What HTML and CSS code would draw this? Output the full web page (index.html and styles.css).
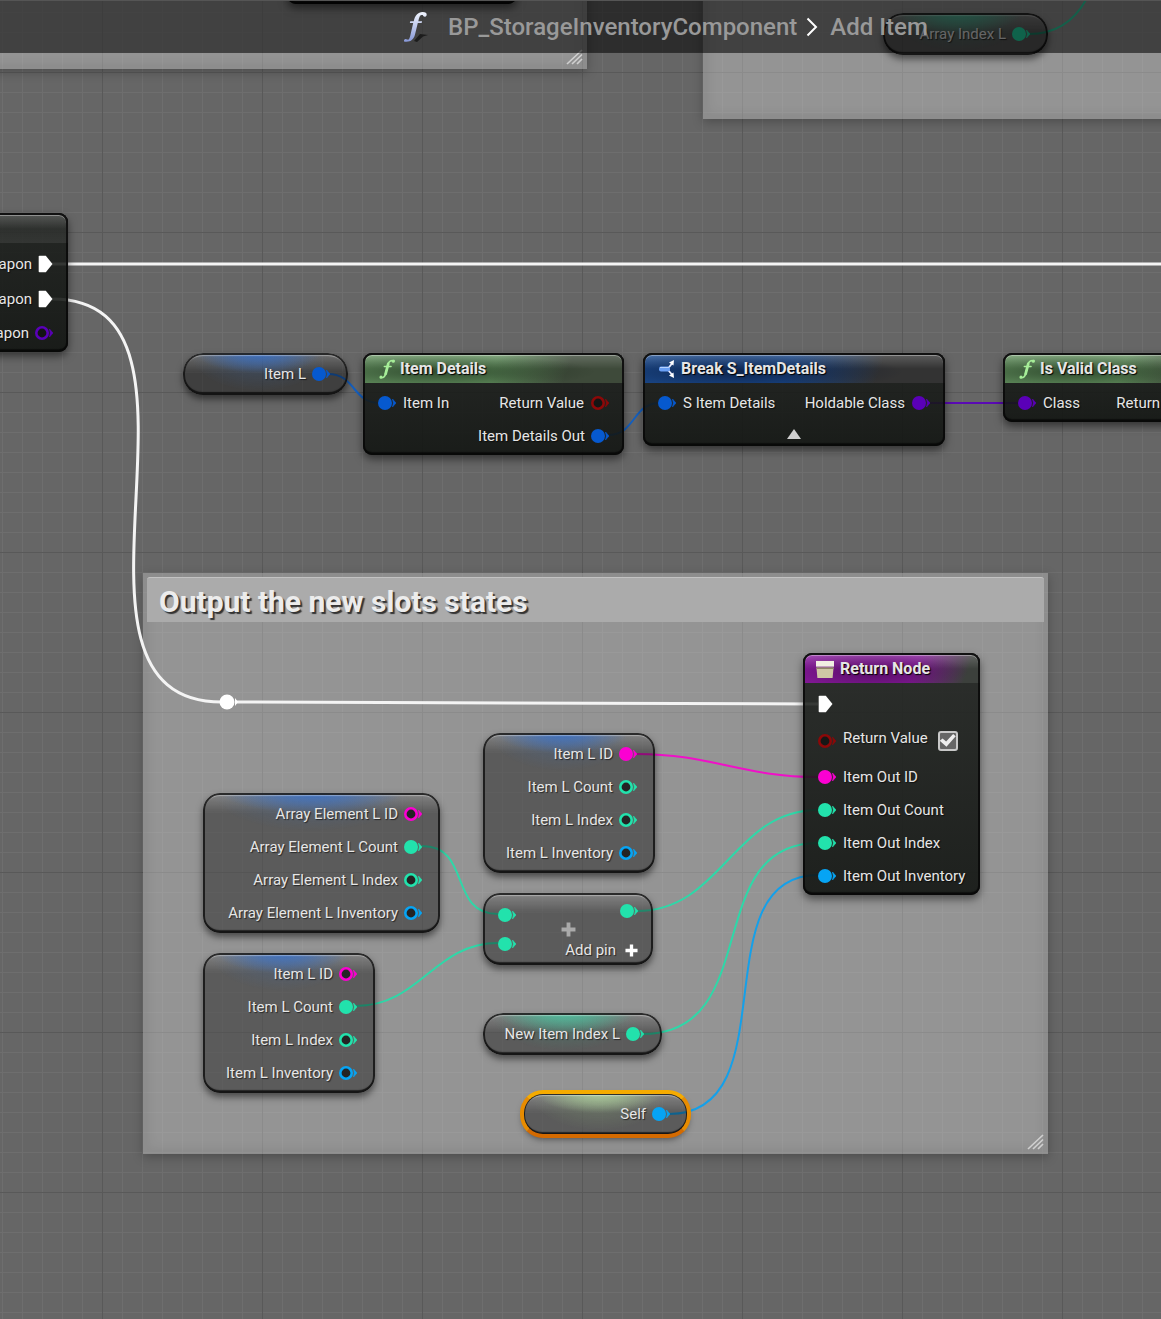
FILE: index.html
```html
<!DOCTYPE html>
<html lang="en">
<head>
<meta charset="utf-8">
<meta name="viewport" content="width=device-width, initial-scale=1">
<title>BP_StorageInventoryComponent</title>
<link rel="stylesheet" href="styles.css">
</head>
<body>
<svg class="defs" aria-hidden="true">
  <symbol id="pin" viewBox="0 0 18 16"><circle cx="7" cy="8" r="7" fill="currentColor"/><path d="M14.500 4 18 8l-3.500 4q1.500-4 0-8z" fill="currentColor" stroke="currentColor" stroke-width=".6"/></symbol>
  <symbol id="pin-open" viewBox="0 0 18 16"><circle cx="7" cy="8" r="5.700" fill="#111" fill-opacity=".75" stroke="currentColor" stroke-width="2.600"/><path d="M14.500 4 18 8l-3.500 4q1.500-4 0-8z" fill="currentColor" stroke="currentColor" stroke-width=".6"/></symbol>
  <symbol id="exec" viewBox="0 0 15 18"><path d="M1.500.8h6.300L14.500 9l-6.700 8.200H1.500q-.8 0-.8-.8V1.600q0-.8.8-.8z" fill="#fff"/></symbol>
  <symbol id="func" viewBox="0 0 16 20"><g fill="none" stroke="currentColor" stroke-linecap="round"><path d="M1.500 18.600C4.500 19.300 6 17.500 6.800 14L9 5.500C9.700 2.600 11.500 1.100 15 1.600" stroke-width="1.600"/><path d="M6.600 15 9.200 5" stroke-width="2.800"/><path d="M5.300 7.500h6.800" stroke-width="1.400"/></g><circle cx="2" cy="18.100" r="1.500" fill="currentColor"/><circle cx="14.300" cy="2.300" r="1.500" fill="currentColor"/></symbol>
  <symbol id="break" viewBox="0 0 18 20"><path d="M10 9.500 14 4.500M10 11l4 4.500" stroke="#eef" stroke-width="1.800" fill="none"/><path d="m11 3.500 5-2.500-.5 5.500zM11 16.500l5 2.500-.5-5.500z" fill="#fff"/><rect x="1" y="7.500" width="11" height="5" rx="2" fill="#6aa0f5"/><path d="M2 8.500h9" stroke="#b5d2ff"/></symbol>
  <symbol id="plus" viewBox="0 0 14 14"><path d="M7 .5v13M.5 7h13" stroke="currentColor" stroke-width="3.600"/></symbol>
  <symbol id="grip" viewBox="0 0 17 16"><path d="M1 15 16 1M6 15 16 5.500M11 15l5-5" stroke="currentColor" stroke-width="1.700"/></symbol>
</svg>

<main class="canvas">
  <section class="comment comment-left"><svg class="grip"><use href="#grip"/></svg></section>
  <section class="comment comment-right"></section>
  <section class="comment comment-output">
    <h2>Output the new slots states</h2>
    <svg class="grip"><use href="#grip"/></svg>
  </section>

  <svg class="wires" aria-hidden="true">
    <g class="w-exec">
      <path d="M52 264H2400"/>
      <path d="M52 299C241 299 30 702 222 702"/>
      <path d="M236 702 818 704"/>
    </g>
    <g class="w-struct">
      <path d="M328 374C356 374 352 403 380 403"/>
      <path d="M608 435C636 435 632 403 660 403"/>
    </g>
    <path class="w-class" d="M930 403H1018"/>
    <path class="w-name" d="M636 754C712 754 742 777 818 777"/>
    <g class="w-int">
      <path d="M422 846C472 846 448 914 498 914"/>
      <path d="M356 1006C420 1006 434 943 498 943"/>
      <path d="M637 911C722 911 733 810 818 810"/>
      <path d="M643 1034C765 1034 700 843 818 843"/>
      <path d="M1029 34C1060 34 1078 16 1088 -4"/>
    </g>
    <path class="w-object" d="M669 1114C790 1114 700 875 818 875"/>
  </svg>

  <article class="node top-node"></article>

  <article class="node event-node">
    <header></header>
    <div class="body">
      <div class="row exec-row out"><span>Weapon</span><svg class="exec"><use href="#exec"/></svg></div>
      <div class="row exec-row out"><span>Weapon</span><svg class="exec"><use href="#exec"/></svg></div>
      <div class="row out"><span>Weapon</span><svg class="pin class"><use href="#pin-open"/></svg></div>
    </div>
  </article>

  <article class="node var pill struct-tint item-l">
    <div class="row out"><span>Item L</span><svg class="pin struct"><use href="#pin"/></svg></div>
  </article>

  <article class="node func item-details">
    <header><svg class="func-icon"><use href="#func"/></svg><h3>Item Details</h3></header>
    <div class="body">
      <div class="row">
        <svg class="pin struct"><use href="#pin"/></svg><span>Item In</span>
        <span class="push">Return Value</span><svg class="pin bool"><use href="#pin-open"/></svg>
      </div>
      <div class="row out"><span>Item Details Out</span><svg class="pin struct"><use href="#pin"/></svg></div>
    </div>
  </article>

  <article class="node break break-details">
    <header><svg class="break-icon"><use href="#break"/></svg><h3>Break S_ItemDetails</h3></header>
    <div class="body">
      <div class="row">
        <svg class="pin struct"><use href="#pin"/></svg><span>S Item Details</span>
        <span class="push">Holdable Class</span><svg class="pin class"><use href="#pin"/></svg>
      </div>
      <button class="expander" type="button" aria-label="Collapse pins"></button>
    </div>
  </article>

  <article class="node func valid-class">
    <header><svg class="func-icon"><use href="#func"/></svg><h3>Is Valid Class</h3></header>
    <div class="body">
      <div class="row">
        <svg class="pin class"><use href="#pin"/></svg><span>Class</span>
        <span class="push">Return Value</span><svg class="pin bool"><use href="#pin-open"/></svg>
      </div>
    </div>
  </article>

  <article class="node return return-node">
    <header>
      <svg class="return-icon" viewBox="0 0 20 20"><path d="M.5 1h19v6H.5z" fill="#f1efe2"/><path d="M1 8h18l-1 11H2z" fill="#cfc7a5"/><path d="M1 8h18v1.500H1z" fill="#8d8765"/></svg>
      <h3>Return Node</h3>
    </header>
    <div class="body">
      <div class="row exec-row"><svg class="exec"><use href="#exec"/></svg></div>
      <div class="row bool-row"><svg class="pin bool"><use href="#pin-open"/></svg><label for="rv">Return Value</label><input id="rv" type="checkbox" checked></div>
      <div class="row"><svg class="pin name"><use href="#pin"/></svg><span>Item Out ID</span></div>
      <div class="row"><svg class="pin int"><use href="#pin"/></svg><span>Item Out Count</span></div>
      <div class="row"><svg class="pin int"><use href="#pin"/></svg><span>Item Out Index</span></div>
      <div class="row"><svg class="pin object"><use href="#pin"/></svg><span>Item Out Inventory</span></div>
    </div>
  </article>

  <article class="node var struct-tint item-top">
    <div class="row out"><span>Item L ID</span><svg class="pin name"><use href="#pin"/></svg></div>
    <div class="row out"><span>Item L Count</span><svg class="pin int"><use href="#pin-open"/></svg></div>
    <div class="row out"><span>Item L Index</span><svg class="pin int"><use href="#pin-open"/></svg></div>
    <div class="row out"><span>Item L Inventory</span><svg class="pin object"><use href="#pin-open"/></svg></div>
  </article>

  <article class="node var struct-tint array-element">
    <div class="row out"><span>Array Element L ID</span><svg class="pin name"><use href="#pin-open"/></svg></div>
    <div class="row out"><span>Array Element L Count</span><svg class="pin int"><use href="#pin"/></svg></div>
    <div class="row out"><span>Array Element L Index</span><svg class="pin int"><use href="#pin-open"/></svg></div>
    <div class="row out"><span>Array Element L Inventory</span><svg class="pin object"><use href="#pin-open"/></svg></div>
  </article>

  <article class="node var struct-tint item-bottom">
    <div class="row out"><span>Item L ID</span><svg class="pin name"><use href="#pin-open"/></svg></div>
    <div class="row out"><span>Item L Count</span><svg class="pin int"><use href="#pin"/></svg></div>
    <div class="row out"><span>Item L Index</span><svg class="pin int"><use href="#pin-open"/></svg></div>
    <div class="row out"><span>Item L Inventory</span><svg class="pin object"><use href="#pin-open"/></svg></div>
  </article>

  <article class="node var add-node">
    <div class="add-in">
      <svg class="pin int"><use href="#pin"/></svg>
      <svg class="pin int"><use href="#pin"/></svg>
    </div>
    <svg class="add-symbol"><use href="#plus"/></svg>
    <div class="add-out">
      <svg class="pin int"><use href="#pin"/></svg>
      <button type="button" class="add-pin">Add pin <svg><use href="#plus"/></svg></button>
    </div>
  </article>

  <article class="node var pill int-tint new-index">
    <div class="row out"><span>New Item Index L</span><svg class="pin int"><use href="#pin"/></svg></div>
  </article>

  <article class="node var pill self-tint self-node">
    <div class="row out"><span>Self</span><svg class="pin object"><use href="#pin"/></svg></div>
  </article>

  <article class="node var pill int-tint array-index">
    <div class="row out"><span>Array Index L</span><svg class="pin int"><use href="#pin"/></svg></div>
  </article>

  <svg class="reroute" viewBox="0 0 20 16" aria-hidden="true"><circle cx="8" cy="8" r="7.500" fill="#fff"/><path d="M16 4l3 4-3 4z" fill="#fff"/></svg>

  <nav class="title-bar" aria-label="Graph path">
    <svg class="title-icon" viewBox="0 0 26 32">
      <defs><linearGradient id="fg" x1="0" y1="0" x2="0" y2="1"><stop offset="0" stop-color="#f2f6ff"/><stop offset="1" stop-color="#8798d8"/></linearGradient></defs>
      <path d="M11 30 17 23l8 1-5 1.500L14 31z" fill="#1c1c1c"/>
      <path d="M1 30.500c-.4-2.500 1.500-3.300 3.200-2 1.500.6 2.300-.6 3-3.500L10.200 12H6.800l.5-1.800h3.400C12 4.500 15 1 19.500 1 22.500 1 24 2.200 23.700 4c-.5 2.300-3.400 2.300-3.700.3-2.500-1-3.700.8-4.700 5.900h3.800l-.5 1.800h-3.800L12 23.500C10.700 29 7 31.500 1 30.500z" fill="url(#fg)"/>
    </svg>
    <a href="#component">BP_StorageInventoryComponent</a>
    <svg class="chevron" viewBox="0 0 12 20"><path d="M1.500 1.500 10 10l-8.500 8.500" fill="none" stroke="#fff" stroke-width="2"/></svg>
    <a href="#add-item">Add Item</a>
  </nav>
</main>
</body>
</html>
```
FILE: styles.css
```css
* { box-sizing: border-box; }

body {
  margin: 0;
  font: 15px/20px Roboto, "Liberation Sans", sans-serif;
  color: #e6e6e6;
}

h2, h3 { margin: 0; }
svg { flex: none; }
.defs { position: absolute; width: 0; height: 0; }

.canvas {
  position: relative;
  min-height: 100vh;
  overflow: hidden;
  background-color: #666;
  background-image:
    linear-gradient(#595959 1px, transparent 1px),
    linear-gradient(90deg, #595959 1px, transparent 1px),
    linear-gradient(#6e6e6e 1px, transparent 1px),
    linear-gradient(90deg, #6e6e6e 1px, transparent 1px);
  background-size: 160px 160px, 160px 160px, 20px 20px, 20px 20px;
  background-position: 0 72px, 102px 0, 0 12px, 2px 0;
}

/* Comment boxes */
.comment {
  position: absolute;
  background: rgba(255, 255, 255, .3);
  border: 4px solid rgba(90, 90, 90, .12);
  box-shadow: inset 0 0 12px rgba(0, 0, 0, .08), 0 3px 10px rgba(0, 0, 0, .25);
}
.comment-left { left: -20px; top: -80px; width: 607px; height: 149px; }
.comment-right { left: 703px; top: -80px; width: 800px; height: 199px; }
.comment-output { left: 143px; top: 573px; width: 905px; height: 581px; }
.comment h2 {
  height: 45px;
  padding: 0 12px;
  background: #ababab;
  border-top: 1px solid #c2c2c2;
  border-radius: 3px 3px 0 0;
  font-size: 30px;
  line-height: 48px;
  color: #ececec;
  text-shadow: 2px 2px 1px #333;
}
.grip {
  position: absolute;
  right: 0;
  bottom: 0;
  width: 17px;
  height: 16px;
  color: #cfcfcf;
}

/* Wires */
.wires {
  position: absolute;
  left: 0;
  top: 0;
  width: 100%;
  height: 100%;
  overflow: visible;
  fill: none;
  stroke-width: 2;
}
.w-exec { stroke: #f4f4f4; stroke-width: 3; }
.w-struct { stroke: #1560c0; }
.w-class { stroke: #5a0ab4; }
.w-name { stroke: #f010c8; }
.w-int { stroke: #2ed8a8; }
.w-object { stroke: #14a0ea; }

/* Nodes */
.node {
  position: absolute;
  border-radius: 9px;
  background: linear-gradient(rgba(24, 27, 24, .84), rgba(17, 20, 17, .9));
  box-shadow:
    inset 0 0 0 2px rgba(8, 8, 8, .85),
    inset 0 -3px 1px rgba(0, 0, 0, .5),
    0 4px 8px rgba(0, 0, 0, .5);
}
.node header {
  display: flex;
  align-items: center;
  height: 30px;
  padding: 0 15px 0 14px;
  border-radius: 9px 9px 0 0;
  background:
    linear-gradient(rgba(255, 255, 255, .22), rgba(255, 255, 255, .05) 50%, rgba(255, 255, 255, .08));
  border: solid #111;
  border-width: 2px 2px 0;
  box-shadow: inset 0 1px 0 rgba(255, 255, 255, .35);
}
.node h3 {
  font-size: 16px;
  line-height: 20px;
  text-shadow: 1px 1px 1px #000;
}
.func header {
  background:
    radial-gradient(ellipse 60% 60% at 30% 60%, rgba(15, 30, 15, .6), transparent),
    linear-gradient(rgba(255, 255, 255, .2), transparent 50%),
    linear-gradient(110deg, #628f5e 50%, #3e4a3a 78%);
}
.break header {
  background:
    radial-gradient(ellipse 55% 70% at 32% 60%, rgba(5, 15, 40, .65), transparent),
    linear-gradient(rgba(255, 255, 255, .2), transparent 50%),
    linear-gradient(110deg, #1c4c90 48%, #333 78%);
}
.return header {
  padding-left: 10px;
  background:
    radial-gradient(ellipse 55% 70% at 40% 60%, rgba(40, 0, 50, .5), transparent),
    linear-gradient(rgba(255, 255, 255, .2), transparent 50%),
    linear-gradient(110deg, #861a9a 62%, #3c403c 92%);
}
.func-icon { width: 16px; height: 20px; margin-right: 5px; color: #a6ee98; }
.break-icon { width: 18px; height: 20px; margin: 0 5px 0 -1px; }
.return-icon { width: 20px; height: 19px; margin-right: 5px; }
.body { padding: 3px 0; }

.row {
  display: flex;
  align-items: center;
  gap: 7px;
  height: 33px;
  padding: 0 15px;
  white-space: nowrap;
  text-shadow: 1px 1px 1px rgba(0, 0, 0, .6);
}
.out { justify-content: flex-end; gap: 6px; }
.push { margin-left: auto; }
.exec-row { height: 35px; }
.bool-row { height: 39px; }
.bool-row label { padding-bottom: 6px; }

.pin { width: 18px; height: 16px; }
.exec { width: 15px; height: 18px; }
.struct { color: #0659cf; }
.class { color: #5a00b8; }
.bool { color: #8c0808; }
.name { color: #fb00d2; }
.int { color: #22e2ac; }
.object { color: #06a4f4; }

/* Compact variable nodes */
.var {
  padding: 4px 0;
  border-radius: 17px;
  background:
    radial-gradient(ellipse 38% 20px at 46% 0, var(--tint, transparent), transparent),
    radial-gradient(ellipse 42% 38px at 46% 0, var(--glow, transparent) 30%, transparent),
    linear-gradient(rgba(255, 255, 255, .26), rgba(255, 255, 255, 0) 20px),
    rgba(4, 4, 4, .4);
  box-shadow:
    inset 0 0 0 2px rgba(20, 20, 20, .85),
    inset 0 3px 1px rgba(255, 255, 255, .35),
    inset 0 -3px 1px rgba(0, 0, 0, .6),
    0 4px 7px rgba(0, 0, 0, .5);
}
.var .row { padding: 0 18px; }
.pill { padding-bottom: 5px; border-radius: 20px; }
.struct-tint { --tint: rgba(50, 110, 205, .8); --glow: rgba(60, 110, 180, .25); }
.int-tint { --tint: rgba(70, 205, 165, .75); --glow: rgba(60, 160, 130, .3); }
.self-tint { --tint: rgba(185, 225, 165, .75); --glow: rgba(150, 190, 130, .25); }

/* Node places on the graph */
.top-node { left: 287px; top: -80px; width: 230px; height: 84px; }
.event-node { left: -160px; top: 213px; width: 228px; }
.item-l { left: 183px; top: 353px; width: 165px; }
.item-details { left: 363px; top: 353px; width: 261px; }
.break-details { left: 643px; top: 353px; width: 302px; }
.valid-class { left: 1003px; top: 353px; width: 238px; }
.return-node { left: 803px; top: 653px; width: 177px; }
.item-top { left: 483px; top: 733px; width: 172px; }
.array-element { left: 203px; top: 793px; width: 237px; }
.item-bottom { left: 203px; top: 953px; width: 172px; }
.add-node { left: 483px; top: 893px; width: 170px; }
.new-index { left: 483px; top: 1013px; width: 179px; }
.self-node { left: 523px; top: 1093px; width: 165px; }
.array-index { left: 883px; top: 13px; width: 165px; }
.reroute { position: absolute; left: 219px; top: 694px; width: 20px; height: 16px; }

.event-node .row { padding-right: 15px; }

.self-node::before {
  content: "";
  position: absolute;
  inset: -3px;
  border: 4px solid #e88c00;
  border-color: #f5ab00 #e88c00 #d46a00;
  border-radius: 23px;
}

.expander {
  display: flex;
  align-items: flex-end;
  justify-content: center;
  width: 100%;
  height: 24px;
  padding: 0 0 4px;
  border: 0;
  background: none;
}
.expander::before {
  content: "";
  width: 14px;
  height: 10px;
  background: #cfcfcf;
  clip-path: polygon(50% 0, 100% 100%, 0 100%);
}

.bool-row input {
  appearance: none;
  display: grid;
  place-items: center;
  width: 20px;
  height: 20px;
  margin: 0 0 0 3px;
  border: 2px solid #c8c8c8;
  border-radius: 3px;
  background: #666;
}
.bool-row input:checked::before {
  content: "";
  width: 16px;
  height: 14px;
  background: #eee;
  clip-path: polygon(0 52%, 18% 36%, 40% 58%, 84% 4%, 100% 20%, 42% 94%);
}

.add-node {
  display: flex;
  justify-content: space-between;
  height: 72px;
  padding: 0 15px;
}
.add-in { display: flex; flex-direction: column; gap: 13px; padding-top: 14px; }
.add-out { display: flex; flex-direction: column; align-items: flex-end; gap: 21px; padding-top: 10px; }
.add-symbol {
  position: absolute;
  left: 78px;
  top: 29px;
  width: 15px;
  height: 15px;
  color: #aaa;
}
.add-pin {
  display: flex;
  align-items: center;
  gap: 9px;
  padding: 0;
  border: 0;
  background: none;
  font: inherit;
  color: inherit;
  text-shadow: 1px 1px 1px rgba(0, 0, 0, .6);
}
.add-pin svg { width: 13px; height: 13px; color: #fff; }

/* Breadcrumb bar laid over the graph */
.title-bar {
  position: absolute;
  inset: 0 0 auto;
  display: flex;
  align-items: center;
  height: 53px;
  padding-left: 403px;
  background: rgba(0, 0, 0, .56);
  border-top: 1px solid #555;
  font-size: 24px;
  font-weight: 500;
  line-height: 30px;
  white-space: nowrap;
}
.title-bar a { color: #999; text-decoration: none; }
.title-icon { width: 26px; height: 32px; margin-right: 19px; }
.chevron { width: 12px; height: 20px; margin: 0 12px 0 9px; }
```
